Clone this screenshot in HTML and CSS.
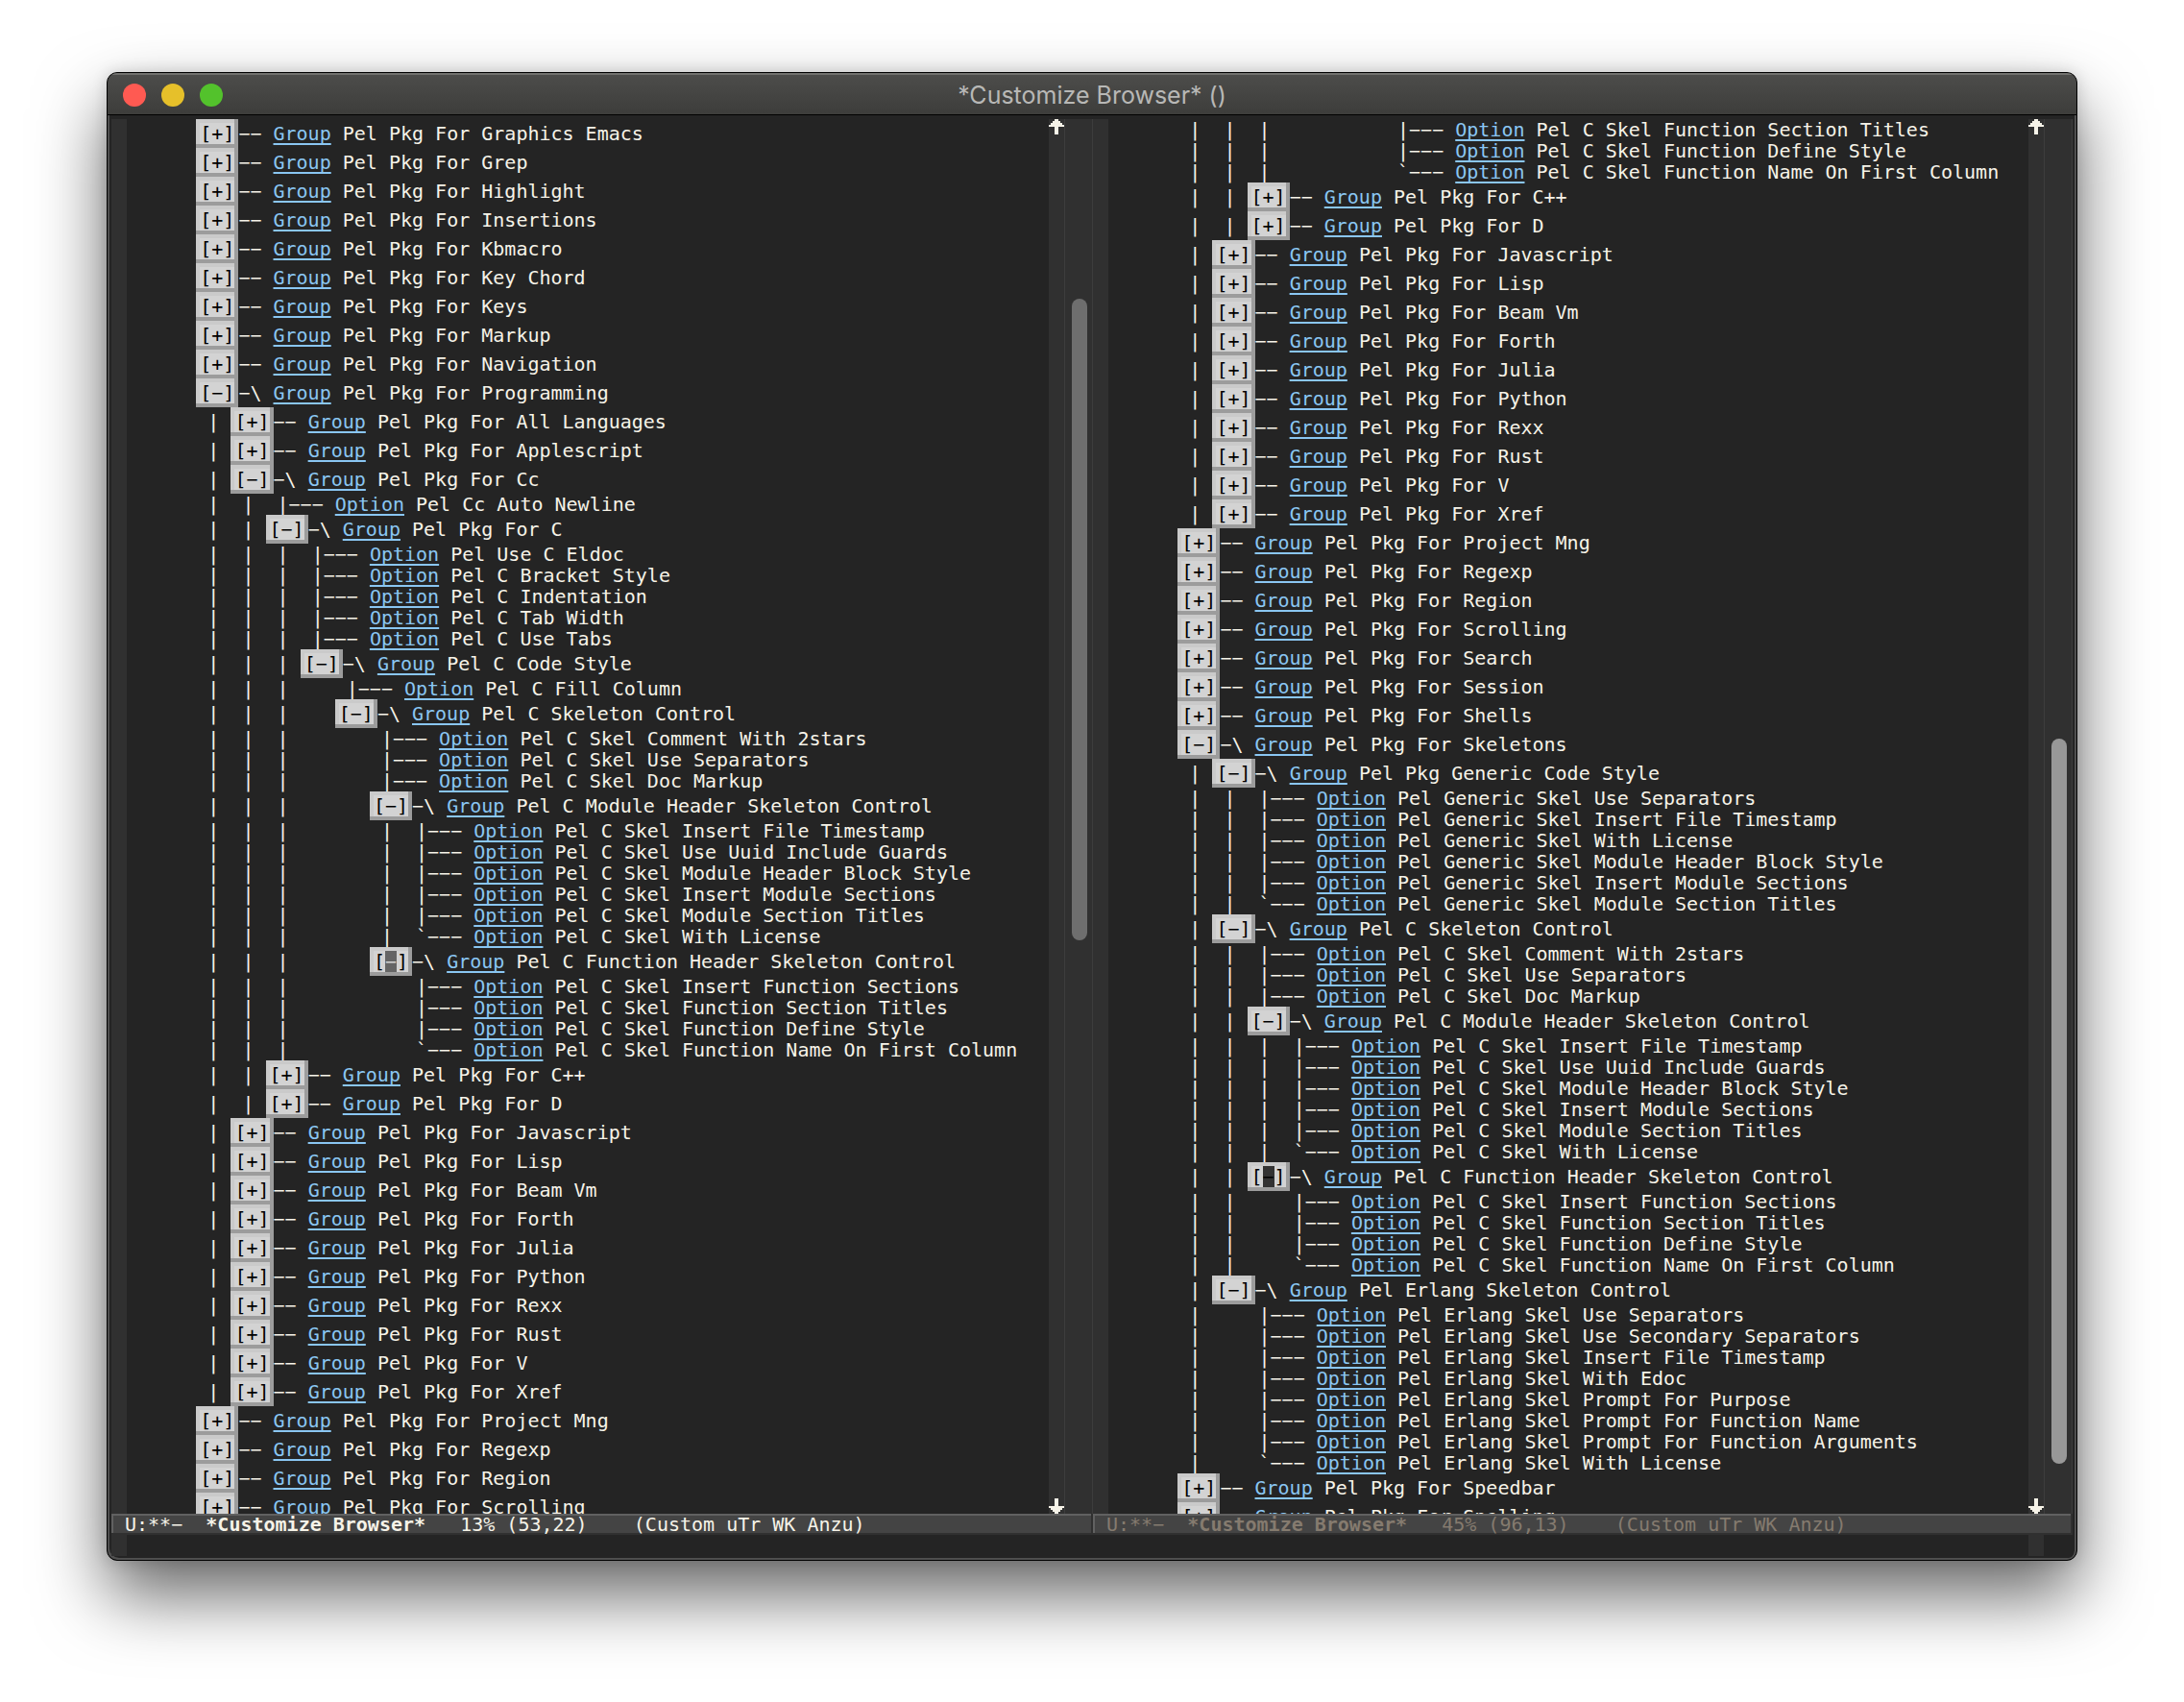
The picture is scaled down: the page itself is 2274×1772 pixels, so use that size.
FILE: index.html
```
<!DOCTYPE html>
<html lang="en">
<head>
<meta charset="utf-8">
<title>*Customize Browser* ()</title>
<link rel="stylesheet" href="styles.css">
</head>
<body>
<main class="window">
<header class="titlebar">
<div class="lights"><button class="light close" aria-label="Close"></button><button class="light minimize" aria-label="Minimize"></button><button class="light zoom" aria-label="Zoom"></button></div>
<h1 class="title">*Customize Browser* ()</h1>
</header>
<div class="panes">
<section class="pane">
<div class="buffer">
<div class="fringe"></div>
<ul class="tree">
<li>      <button>[+]</button>−− <a href="#">Group</a> Pel Pkg For Graphics Emacs</li>
<li>      <button>[+]</button>−− <a href="#">Group</a> Pel Pkg For Grep</li>
<li>      <button>[+]</button>−− <a href="#">Group</a> Pel Pkg For Highlight</li>
<li>      <button>[+]</button>−− <a href="#">Group</a> Pel Pkg For Insertions</li>
<li>      <button>[+]</button>−− <a href="#">Group</a> Pel Pkg For Kbmacro</li>
<li>      <button>[+]</button>−− <a href="#">Group</a> Pel Pkg For Key Chord</li>
<li>      <button>[+]</button>−− <a href="#">Group</a> Pel Pkg For Keys</li>
<li>      <button>[+]</button>−− <a href="#">Group</a> Pel Pkg For Markup</li>
<li>      <button>[+]</button>−− <a href="#">Group</a> Pel Pkg For Navigation</li>
<li>      <button>[−]</button>−\ <a href="#">Group</a> Pel Pkg For Programming</li>
<li>       | <button>[+]</button>−− <a href="#">Group</a> Pel Pkg For All Languages</li>
<li>       | <button>[+]</button>−− <a href="#">Group</a> Pel Pkg For Applescript</li>
<li>       | <button>[−]</button>−\ <a href="#">Group</a> Pel Pkg For Cc</li>
<li>       |  |  |−−− <a href="#">Option</a> Pel Cc Auto Newline</li>
<li>       |  | <button>[−]</button>−\ <a href="#">Group</a> Pel Pkg For C</li>
<li>       |  |  |  |−−− <a href="#">Option</a> Pel Use C Eldoc</li>
<li>       |  |  |  |−−− <a href="#">Option</a> Pel C Bracket Style</li>
<li>       |  |  |  |−−− <a href="#">Option</a> Pel C Indentation</li>
<li>       |  |  |  |−−− <a href="#">Option</a> Pel C Tab Width</li>
<li>       |  |  |  |−−− <a href="#">Option</a> Pel C Use Tabs</li>
<li>       |  |  | <button>[−]</button>−\ <a href="#">Group</a> Pel C Code Style</li>
<li>       |  |  |     |−−− <a href="#">Option</a> Pel C Fill Column</li>
<li>       |  |  |    <button>[−]</button>−\ <a href="#">Group</a> Pel C Skeleton Control</li>
<li>       |  |  |        |−−− <a href="#">Option</a> Pel C Skel Comment With 2stars</li>
<li>       |  |  |        |−−− <a href="#">Option</a> Pel C Skel Use Separators</li>
<li>       |  |  |        |−−− <a href="#">Option</a> Pel C Skel Doc Markup</li>
<li>       |  |  |       <button>[−]</button>−\ <a href="#">Group</a> Pel C Module Header Skeleton Control</li>
<li>       |  |  |        |  |−−− <a href="#">Option</a> Pel C Skel Insert File Timestamp</li>
<li>       |  |  |        |  |−−− <a href="#">Option</a> Pel C Skel Use Uuid Include Guards</li>
<li>       |  |  |        |  |−−− <a href="#">Option</a> Pel C Skel Module Header Block Style</li>
<li>       |  |  |        |  |−−− <a href="#">Option</a> Pel C Skel Insert Module Sections</li>
<li>       |  |  |        |  |−−− <a href="#">Option</a> Pel C Skel Module Section Titles</li>
<li>       |  |  |        |  `−−− <a href="#">Option</a> Pel C Skel With License</li>
<li>       |  |  |       <button>[<span class="cursor">−</span>]</button>−\ <a href="#">Group</a> Pel C Function Header Skeleton Control</li>
<li>       |  |  |           |−−− <a href="#">Option</a> Pel C Skel Insert Function Sections</li>
<li>       |  |  |           |−−− <a href="#">Option</a> Pel C Skel Function Section Titles</li>
<li>       |  |  |           |−−− <a href="#">Option</a> Pel C Skel Function Define Style</li>
<li>       |  |  |           `−−− <a href="#">Option</a> Pel C Skel Function Name On First Column</li>
<li>       |  | <button>[+]</button>−− <a href="#">Group</a> Pel Pkg For C++</li>
<li>       |  | <button>[+]</button>−− <a href="#">Group</a> Pel Pkg For D</li>
<li>       | <button>[+]</button>−− <a href="#">Group</a> Pel Pkg For Javascript</li>
<li>       | <button>[+]</button>−− <a href="#">Group</a> Pel Pkg For Lisp</li>
<li>       | <button>[+]</button>−− <a href="#">Group</a> Pel Pkg For Beam Vm</li>
<li>       | <button>[+]</button>−− <a href="#">Group</a> Pel Pkg For Forth</li>
<li>       | <button>[+]</button>−− <a href="#">Group</a> Pel Pkg For Julia</li>
<li>       | <button>[+]</button>−− <a href="#">Group</a> Pel Pkg For Python</li>
<li>       | <button>[+]</button>−− <a href="#">Group</a> Pel Pkg For Rexx</li>
<li>       | <button>[+]</button>−− <a href="#">Group</a> Pel Pkg For Rust</li>
<li>       | <button>[+]</button>−− <a href="#">Group</a> Pel Pkg For V</li>
<li>       | <button>[+]</button>−− <a href="#">Group</a> Pel Pkg For Xref</li>
<li>      <button>[+]</button>−− <a href="#">Group</a> Pel Pkg For Project Mng</li>
<li>      <button>[+]</button>−− <a href="#">Group</a> Pel Pkg For Regexp</li>
<li>      <button>[+]</button>−− <a href="#">Group</a> Pel Pkg For Region</li>
<li>      <button>[+]</button>−− <a href="#">Group</a> Pel Pkg For Scrolling</li>
</ul>
<div class="fringe marks">
<svg width="16" height="16" viewBox="0 0 16 16"><path d="M6 0h4v2h2v2h2v2h2v2h-6v8h-4v-8h-6v-2h2v-2h2v-2h2z"/></svg>
<svg width="16" height="16" viewBox="0 0 16 16"><path d="M6 16h4v-2h2v-2h2v-2h2v-2h-6v-8h-4v8h-6v2h2v2h2v2h2z"/></svg>
</div>
<div class="scroller"><div class="thumb" style="top:12.9%;height:46%"></div></div>
</div>
<footer class="modeline">U:**−  <b>*Customize Browser*</b>   13% (53,22)    (Custom uTr WK Anzu)</footer>
</section>
<section class="pane inactive">
<div class="buffer">
<div class="fringe"></div>
<ul class="tree">
<li>       |  |  |           |−−− <a href="#">Option</a> Pel C Skel Function Section Titles</li>
<li>       |  |  |           |−−− <a href="#">Option</a> Pel C Skel Function Define Style</li>
<li>       |  |  |           `−−− <a href="#">Option</a> Pel C Skel Function Name On First Column</li>
<li>       |  | <button>[+]</button>−− <a href="#">Group</a> Pel Pkg For C++</li>
<li>       |  | <button>[+]</button>−− <a href="#">Group</a> Pel Pkg For D</li>
<li>       | <button>[+]</button>−− <a href="#">Group</a> Pel Pkg For Javascript</li>
<li>       | <button>[+]</button>−− <a href="#">Group</a> Pel Pkg For Lisp</li>
<li>       | <button>[+]</button>−− <a href="#">Group</a> Pel Pkg For Beam Vm</li>
<li>       | <button>[+]</button>−− <a href="#">Group</a> Pel Pkg For Forth</li>
<li>       | <button>[+]</button>−− <a href="#">Group</a> Pel Pkg For Julia</li>
<li>       | <button>[+]</button>−− <a href="#">Group</a> Pel Pkg For Python</li>
<li>       | <button>[+]</button>−− <a href="#">Group</a> Pel Pkg For Rexx</li>
<li>       | <button>[+]</button>−− <a href="#">Group</a> Pel Pkg For Rust</li>
<li>       | <button>[+]</button>−− <a href="#">Group</a> Pel Pkg For V</li>
<li>       | <button>[+]</button>−− <a href="#">Group</a> Pel Pkg For Xref</li>
<li>      <button>[+]</button>−− <a href="#">Group</a> Pel Pkg For Project Mng</li>
<li>      <button>[+]</button>−− <a href="#">Group</a> Pel Pkg For Regexp</li>
<li>      <button>[+]</button>−− <a href="#">Group</a> Pel Pkg For Region</li>
<li>      <button>[+]</button>−− <a href="#">Group</a> Pel Pkg For Scrolling</li>
<li>      <button>[+]</button>−− <a href="#">Group</a> Pel Pkg For Search</li>
<li>      <button>[+]</button>−− <a href="#">Group</a> Pel Pkg For Session</li>
<li>      <button>[+]</button>−− <a href="#">Group</a> Pel Pkg For Shells</li>
<li>      <button>[−]</button>−\ <a href="#">Group</a> Pel Pkg For Skeletons</li>
<li>       | <button>[−]</button>−\ <a href="#">Group</a> Pel Pkg Generic Code Style</li>
<li>       |  |  |−−− <a href="#">Option</a> Pel Generic Skel Use Separators</li>
<li>       |  |  |−−− <a href="#">Option</a> Pel Generic Skel Insert File Timestamp</li>
<li>       |  |  |−−− <a href="#">Option</a> Pel Generic Skel With License</li>
<li>       |  |  |−−− <a href="#">Option</a> Pel Generic Skel Module Header Block Style</li>
<li>       |  |  |−−− <a href="#">Option</a> Pel Generic Skel Insert Module Sections</li>
<li>       |  |  `−−− <a href="#">Option</a> Pel Generic Skel Module Section Titles</li>
<li>       | <button>[−]</button>−\ <a href="#">Group</a> Pel C Skeleton Control</li>
<li>       |  |  |−−− <a href="#">Option</a> Pel C Skel Comment With 2stars</li>
<li>       |  |  |−−− <a href="#">Option</a> Pel C Skel Use Separators</li>
<li>       |  |  |−−− <a href="#">Option</a> Pel C Skel Doc Markup</li>
<li>       |  | <button>[−]</button>−\ <a href="#">Group</a> Pel C Module Header Skeleton Control</li>
<li>       |  |  |  |−−− <a href="#">Option</a> Pel C Skel Insert File Timestamp</li>
<li>       |  |  |  |−−− <a href="#">Option</a> Pel C Skel Use Uuid Include Guards</li>
<li>       |  |  |  |−−− <a href="#">Option</a> Pel C Skel Module Header Block Style</li>
<li>       |  |  |  |−−− <a href="#">Option</a> Pel C Skel Insert Module Sections</li>
<li>       |  |  |  |−−− <a href="#">Option</a> Pel C Skel Module Section Titles</li>
<li>       |  |  |  `−−− <a href="#">Option</a> Pel C Skel With License</li>
<li>       |  | <button>[<span class="cursor">−</span>]</button>−\ <a href="#">Group</a> Pel C Function Header Skeleton Control</li>
<li>       |  |     |−−− <a href="#">Option</a> Pel C Skel Insert Function Sections</li>
<li>       |  |     |−−− <a href="#">Option</a> Pel C Skel Function Section Titles</li>
<li>       |  |     |−−− <a href="#">Option</a> Pel C Skel Function Define Style</li>
<li>       |  |     `−−− <a href="#">Option</a> Pel C Skel Function Name On First Column</li>
<li>       | <button>[−]</button>−\ <a href="#">Group</a> Pel Erlang Skeleton Control</li>
<li>       |     |−−− <a href="#">Option</a> Pel Erlang Skel Use Separators</li>
<li>       |     |−−− <a href="#">Option</a> Pel Erlang Skel Use Secondary Separators</li>
<li>       |     |−−− <a href="#">Option</a> Pel Erlang Skel Insert File Timestamp</li>
<li>       |     |−−− <a href="#">Option</a> Pel Erlang Skel With Edoc</li>
<li>       |     |−−− <a href="#">Option</a> Pel Erlang Skel Prompt For Purpose</li>
<li>       |     |−−− <a href="#">Option</a> Pel Erlang Skel Prompt For Function Name</li>
<li>       |     |−−− <a href="#">Option</a> Pel Erlang Skel Prompt For Function Arguments</li>
<li>       |     `−−− <a href="#">Option</a> Pel Erlang Skel With License</li>
<li>      <button>[+]</button>−− <a href="#">Group</a> Pel Pkg For Speedbar</li>
<li>      <button>[+]</button>−− <a href="#">Group</a> Pel Pkg For Spelling</li>
</ul>
<div class="fringe marks">
<svg width="16" height="16" viewBox="0 0 16 16"><path d="M6 0h4v2h2v2h2v2h2v2h-6v8h-4v-8h-6v-2h2v-2h2v-2h2z"/></svg>
<svg width="16" height="16" viewBox="0 0 16 16"><path d="M6 16h4v-2h2v-2h2v-2h2v-2h-6v-8h-4v8h-6v2h2v2h2v2h2z"/></svg>
</div>
<div class="scroller"><div class="thumb" style="top:44.4%;height:52%"></div></div>
</div>
<footer class="modeline">U:**−  <b>*Customize Browser*</b>   45% (96,13)    (Custom uTr WK Anzu)</footer>
</section>
</div>
<div class="echo-area"><div class="fringe"></div><div class="fringe"></div></div>
</main>
</body>
</html>
```
FILE: styles.css
```
* {
  box-sizing: border-box;
}

body {
  margin: 0;
  padding: 75px 111px 147px;
  height: 100vh;
  background: #fff;
  color: #f6f3e8;
  font: 20px/22px "DejaVu Sans Mono", monospace;
}

.window {
  display: flex;
  flex-direction: column;
  height: 100%;
  overflow: hidden;
  border: 1px solid #000;
  border-radius: 11px;
  background: #242424;
  box-shadow: 0 36px 72px rgba(0, 0, 0, 0.6), 0 0 16px rgba(0, 0, 0, 0.15);
}

.titlebar {
  display: grid;
  grid-template-columns: 1fr auto 1fr;
  align-items: center;
  flex: none;
  height: 44px;
  padding: 2px 16px 0;
  border-bottom: 1px solid #000;
  background: linear-gradient(#4d4d4b, #3d3d3b);
  box-shadow: inset 0 2px #71716e;
}

.lights {
  display: flex;
  gap: 16px;
}

.light {
  width: 24px;
  height: 24px;
  padding: 0;
  border: 0;
  border-radius: 50%;
}

.close { background: #ff5a52; }
.minimize { background: #e6c02a; }
.zoom { background: #53c22c; }

.title {
  margin: 0;
  color: #b8b8b6;
  font: 25px/32px Inter, sans-serif;
}

.panes {
  display: grid;
  grid-template-columns: calc(50% + 1px) 1fr;
  flex: 1;
  min-height: 0;
  padding: 4px 4px 0;
  box-shadow: inset 2px 0 #4f4f4f, inset -2px 0 #4f4f4f;
}

.pane {
  display: flex;
  flex-direction: column;
  min-width: 0;
  min-height: 0;
}

.buffer {
  display: flex;
  flex: 1;
  min-height: 0;
}

.fringe {
  flex: none;
  width: 16px;
  background: #303030;
}

.marks {
  display: flex;
  flex-direction: column;
  justify-content: space-between;
}

.marks svg {
  display: block;
  fill: #f6f3e8;
}

.tree {
  flex: 1;
  min-width: 0;
  margin: 0;
  padding: 0;
  overflow: hidden;
  list-style: none;
}

.tree li {
  white-space: pre;
}

.tree button {
  padding: 4px;
  border: 0;
  background: #d3d3d3;
  box-shadow: inset -4px -4px #9c9c9c, inset 4px 4px #cacaca;
  color: #000;
  font: inherit;
}

.tree a {
  color: #8ac6f2;
  text-decoration: underline 2px;
  text-decoration-skip-ink: none;
  text-underline-offset: 3px;
}

.cursor {
  display: inline-block;
  background: #656565;
  color: #d3d3d3;
}

.inactive .cursor {
  background: #333;
  color: #000;
}

.scroller {
  position: relative;
  flex: none;
  width: 30px;
  border: solid #3d3d3d;
  border-width: 0 1px;
  background: #303030;
}

.thumb {
  position: absolute;
  left: 7px;
  width: 16px;
  border-radius: 8px;
  background: #6e6e6e;
}

.inactive .thumb {
  background: #989898;
}

.modeline {
  flex: none;
  height: 22px;
  padding-left: 14px;
  background: #444;
  box-shadow: inset -2px -2px #303030, inset 2px 2px #616161;
  white-space: pre;
}

.inactive .modeline {
  color: #857b6f;
}

.echo-area {
  display: flex;
  justify-content: space-between;
  flex: none;
  height: 26px;
  padding: 0 34px 4px 4px;
  border-radius: 0 0 10px 10px;
  box-shadow: inset 2px -2px #4f4f4f, inset -2px 0 #4f4f4f;
}
```
